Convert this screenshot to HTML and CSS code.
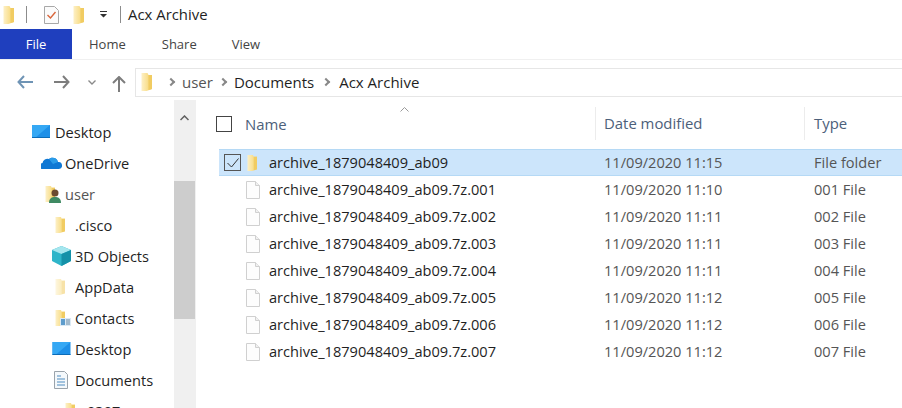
FILE: index.html

```html
<!DOCTYPE html>
<html lang="en">
<head>
<meta charset="utf-8"/>
<title>Acx Archive</title>
<link rel="stylesheet" href="styles.css">
</head>
<body>
<svg class="defs" width="0" height="0">
  <defs>
    <linearGradient id="folder-fill" x1="0" x2="1" y1="0" y2="0">
      <stop offset="0" stop-color="#fdf0c6"/>
      <stop offset="0.55" stop-color="#f9e092"/>
      <stop offset="1" stop-color="#efc95a"/>
    </linearGradient>
  </defs>
  <symbol id="folder" viewBox="0 0 12 20">
    <path d="M1 1h6l1 2h3.500v14L6 19H1z" fill="url(#folder-fill)"/>
    <path d="M8 3h3.500v14L8 18z" fill="#f1cc62"/>
  </symbol>
  <symbol id="file" viewBox="0 0 14 18">
    <path d="M.5.500h9l4 4v13H.5z" fill="#fdfdfd" stroke="#d0d0d0"/>
    <path d="M9.500.5v4h4" fill="#f0f0f0" stroke="#d0d0d0"/>
  </symbol>
  <symbol id="screen" viewBox="0 0 18 13">
    <path d="M0 0h18v13H0z" fill="#1e90e8"/>
    <path d="M0 0h18L3 13H0z" fill="#35a8f4"/>
    <path d="M0 12h18v1H0z" fill="#0b6cb8"/>
  </symbol>
</svg>

<div class="titlebar">
  <svg class="ico-folder-top"><use href="#folder"/></svg>
  <span class="bar-sep"></span>
  <svg class="ico-props" viewBox="0 0 15 18">
    <path d="M.5.500h10l4 4v13H.5z" fill="#fbfbfb" stroke="#a8a8a8"/>
    <path d="M3.500 9l3 3 5-6" fill="none" stroke="#d9653a" stroke-width="1.400"/>
  </svg>
  <svg class="ico-folder-top second"><use href="#folder"/></svg>
  <svg class="ico-caret" viewBox="0 0 7 7">
    <path d="M0 0h7v1H0zM0 3h7L3.500 6.500z" fill="#333"/>
  </svg>
  <span class="bar-sep last"></span>
  <span class="title">Acx Archive</span>
</div>

<div class="tabs">
  <div class="tab file-tab">File</div>
  <div class="tab home-tab">Home</div>
  <div class="tab share-tab">Share</div>
  <div class="tab view-tab">View</div>
</div>

<div class="addressbar">
  <svg class="nav-arrow back" viewBox="0 0 16 14"><path d="M7 1L1.500 7 7 13M2 7h14" fill="none" stroke="#6f94b5" stroke-width="2"/></svg>
  <svg class="nav-arrow fwd" viewBox="0 0 16 14"><path d="M9 1l5.500 6L9 13M14 7H0" fill="none" stroke="#7d7d7d" stroke-width="2"/></svg>
  <svg class="nav-drop" viewBox="0 0 8 5"><path d="M.5.500L4 4 7.500.5" fill="none" stroke="#8a8a8a" stroke-width="1.400"/></svg>
  <svg class="nav-arrow up" viewBox="0 0 14 16"><path d="M1 7l6-6 6 6M7 1.500V16" fill="none" stroke="#7d7d7d" stroke-width="2"/></svg>
  <div class="crumbs">
    <svg class="crumb-folder"><use href="#folder"/></svg>
    <span class="chev"></span><span class="crumb grey">user</span>
    <span class="chev"></span><span class="crumb">Documents</span>
    <span class="chev wide"></span><span class="crumb">Acx Archive</span>
  </div>
</div>

<div class="main">
  <div class="nav">
    <div class="tree">
      <div class="node lvl0"><svg class="ic-screen"><use href="#screen"/></svg>Desktop</div>
      <div class="node lvl1"><svg class="ic-cloud" viewBox="0 0 21 13"><path d="M2 13a3 3 0 0 1-.5-6A5 5 0 0 1 8 3a5.500 5.500 0 0 1 9 3 3.500 3.500 0 0 1 1 7z" fill="#0f78d4"/><path d="M8 3a5.500 5.500 0 0 1 9 3l-5 2z" fill="#2a9be8"/></svg>OneDrive</div>
      <div class="node lvl2 grey"><svg class="ic-folder"><use href="#folder"/></svg><svg class="ic-user" viewBox="0 0 12 14"><circle cx="6" cy="4" r="3.500" fill="#6b4a2f"/><path d="M0 14c0-5 3-6 6-6s6 1 6 6z" fill="#3f8a63"/></svg>user</div>
      <div class="node lvl3"><svg class="ic-folder"><use href="#folder"/></svg>.cisco</div>
      <div class="node lvl3 wide-ic"><svg class="ic-cube" viewBox="0 0 19 20"><path d="M9.500 0L19 4v11l-9.500 5L0 15V4z" fill="#2eb5c9"/><path d="M0 4l9.500 4L19 4 9.500 0z" fill="#a5e6ee"/><path d="M9.500 8v12L19 15V4z" fill="#1591a8"/></svg>3D Objects</div>
      <div class="node lvl3"><svg class="ic-folder faded"><use href="#folder"/></svg>AppData</div>
      <div class="node lvl3"><svg class="ic-folder"><use href="#folder"/></svg><svg class="ic-contact" viewBox="0 0 11 8"><path d="M0 0h11v8H0z" fill="#dbe9f4"/><path d="M1 1h4v6H1z" fill="#5e9ccc"/><path d="M6 2h4M6 4h4M6 6h4" stroke="#6b8ba5"/></svg>Contacts</div>
      <div class="node lvl3 wide-ic"><svg class="ic-screen wide"><use href="#screen"/></svg>Desktop</div>
      <div class="node lvl3"><svg class="ic-doc" viewBox="0 0 14 18"><path d="M.5.500h10l3 3v14H.5z" fill="#f4f8fb" stroke="#9aa3ab"/><path d="M3 5h4M3 8h8M3 11h8M3 14h8" stroke="#4f8cc0"/></svg>Documents</div>
      <div class="node lvl4"><svg class="ic-folder"><use href="#folder"/></svg>0307</div>
    </div>
    <div class="scrollbar">
      <div class="scroll-up"><svg viewBox="0 0 9 6"><path d="M.5 5L4.500 1l4 4" fill="none" stroke="#606060" stroke-width="1.500"/></svg></div>
      <div class="thumb"></div>
    </div>
  </div>

  <div class="content">
    <div class="head">
      <svg class="sort" viewBox="0 0 9 5"><path d="M.5 4.500L4.500.5l4 4" fill="none" stroke="#9a9a9a"/></svg>
      <span class="head-check"></span>
      <span class="col-name">Name</span>
      <span class="col-date">Date modified</span>
      <span class="col-type">Type</span>
    </div>
    <div class="rows">
      <div class="row selected">
        <span class="row-check"><svg viewBox="0 0 12 10"><path d="M.5 5l4 4 7-8.500" fill="none" stroke="#333"/></svg></span>
        <svg class="ic-folder row-ic"><use href="#folder"/></svg>
        <span class="col-name">archive_1879048409_ab09</span>
        <span class="col-date">11/09/2020 11:15</span>
        <span class="col-type">File folder</span>
      </div>
      <div class="row"><svg class="ic-file row-ic"><use href="#file"/></svg><span class="col-name">archive_1879048409_ab09.7z.001</span><span class="col-date">11/09/2020 11:10</span><span class="col-type">001 File</span></div>
      <div class="row"><svg class="ic-file row-ic"><use href="#file"/></svg><span class="col-name">archive_1879048409_ab09.7z.002</span><span class="col-date">11/09/2020 11:11</span><span class="col-type">002 File</span></div>
      <div class="row"><svg class="ic-file row-ic"><use href="#file"/></svg><span class="col-name">archive_1879048409_ab09.7z.003</span><span class="col-date">11/09/2020 11:11</span><span class="col-type">003 File</span></div>
      <div class="row"><svg class="ic-file row-ic"><use href="#file"/></svg><span class="col-name">archive_1879048409_ab09.7z.004</span><span class="col-date">11/09/2020 11:11</span><span class="col-type">004 File</span></div>
      <div class="row"><svg class="ic-file row-ic"><use href="#file"/></svg><span class="col-name">archive_1879048409_ab09.7z.005</span><span class="col-date">11/09/2020 11:12</span><span class="col-type">005 File</span></div>
      <div class="row"><svg class="ic-file row-ic"><use href="#file"/></svg><span class="col-name">archive_1879048409_ab09.7z.006</span><span class="col-date">11/09/2020 11:12</span><span class="col-type">006 File</span></div>
      <div class="row"><svg class="ic-file row-ic"><use href="#file"/></svg><span class="col-name">archive_1879048409_ab09.7z.007</span><span class="col-date">11/09/2020 11:12</span><span class="col-type">007 File</span></div>
    </div>
  </div>
</div>
</body>
</html>
```

FILE: styles.css

```css
* { box-sizing: border-box; }
html, body { height: 100%; }
body {
  margin: 0;
  width: 902px;
  height: 408px;
  overflow: hidden;
  background: #fff;
  font-family: "Open Sans", "Noto Sans", sans-serif;
  font-size: 14.6px;
  color: #1f1f1f;
}
.defs { display: block; height: 0; }
svg { display: block; flex: none; }

.titlebar { display: flex; align-items: center; height: 29px; }
.ico-folder-top { width: 13px; height: 20px; margin-left: 2px; }
.ico-folder-top.second { margin-left: 13px; }
.bar-sep { width: 1px; height: 17px; background: #8c8c8c; margin-left: 11px; }
.bar-sep.last { margin-left: 13px; }
.ico-props { width: 15px; height: 18px; margin-left: 17px; }
.ico-caret { width: 7px; height: 7px; margin-left: 15px; }
.title { margin-left: 7px; padding-bottom: 2px; font-size: 14.9px; }

.tabs { display: flex; height: 31px; border-bottom: 1px solid #f0f0f0; }
.tab { display: flex; align-items: center; height: 30px; color: #444; font-size: 13px; }
.file-tab { width: 72px; justify-content: center; background: #1f3fbe; color: #fff; }
.home-tab { margin-left: 17px; }
.share-tab { margin-left: 36px; }
.view-tab { margin-left: 35px; }

.addressbar { display: flex; align-items: center; height: 40px; padding-top: 4px; }
.nav-arrow { width: 16px; height: 14px; }
.nav-arrow.back { margin-left: 17px; }
.nav-arrow.fwd { margin-left: 21px; }
.nav-drop { width: 8px; height: 5px; margin-left: 18px; }
.nav-arrow.up { width: 14px; height: 16px; margin-left: 16px; margin-top: 3px; }
.crumbs {
  flex: 1;
  display: flex;
  align-items: center;
  height: 29px;
  margin-left: 9px;
  border: 1px solid #e6e6e6;
  border-right: 0;
  padding-left: 4px;
}
.crumb-folder { width: 13px; height: 20px; }
.chev {
  width: 6px;
  height: 6px;
  margin: 0 8px 0 15px;
  border-top: 2px solid #888;
  border-right: 2px solid #888;
  transform: rotate(45deg);
}
.crumb + .chev { margin-left: 7px; }
.crumb + .chev.wide { margin-left: 9px; margin-right: 10px; }
.crumb { font-size: 15px; }
.grey { color: #555; }

.main { display: flex; height: 308px; }
.nav { display: flex; width: 196px; border-right: 1px solid #f0f0f0; }
.tree { width: 174px; padding-top: 16px; }
.node { display: flex; align-items: center; height: 31px; white-space: nowrap; }
.lvl0 { padding-left: 32px; }
.lvl1 { padding-left: 41px; }
.lvl2 { padding-left: 44px; }
.lvl3 { padding-left: 54px; }
.lvl3.wide-ic { padding-left: 52px; }
.lvl4 { padding-left: 64px; }

.ic-screen { width: 18px; height: 13px; margin-right: 5px; }
.ic-screen.wide { width: 19px; margin-right: 4px; }
.ic-cloud { width: 21px; height: 13px; margin-right: 3px; }
.ic-folder { width: 12px; height: 18px; margin-right: 9px; }
.ic-folder.faded { opacity: 0.55; }
.lvl2 .ic-folder { margin-right: 8px; }
.lvl4 .ic-folder { margin-right: 11px; }
.ic-user { width: 12px; height: 14px; margin: 5px 4px 0 -15px; }
.ic-contact { width: 11px; height: 8px; margin: 9px 4px 0 -15px; }
.ic-cube { width: 19px; height: 20px; margin-right: 4px; }
.ic-doc { width: 14px; height: 18px; margin-right: 7px; }

.scrollbar { width: 21px; background: #f0f0f0; }
.scroll-up { display: flex; justify-content: center; padding-top: 15px; height: 81px; }
.scroll-up svg { width: 9px; height: 6px; }
.thumb { height: 138px; background: #cdcdcd; }

.content { flex: 1; position: relative; }
.head { display: flex; align-items: center; height: 49px; padding-bottom: 2px; color: #4c607a; font-size: 14.9px; }
.sort { position: absolute; left: 204px; top: 7px; width: 9px; height: 5px; }
.head-check { width: 16px; height: 16px; margin-left: 20px; border: 1.500px solid #444; }
.head .col-name { margin-left: 13px; width: 350px; }
.head .col-date { width: 209px; padding-left: 8px; border-left: 1px solid #ececec; line-height: 33px; }
.head .col-type { padding-left: 9px; border-left: 1px solid #ececec; line-height: 33px; }

.rows { padding-left: 23px; }
.row { display: flex; align-items: center; height: 27px; white-space: nowrap; }
.row.selected { background: #cce5fb; border: 1px solid #b5d9f5; border-width: 1px 0; }
.row-check {
  display: flex;
  align-items: center;
  justify-content: center;
  width: 17px;
  height: 17px;
  margin-left: 5px;
  margin-right: 7px;
  border: 1px solid #555;
}
.row-check svg { width: 12px; height: 10px; }
.row-ic { margin-left: 27px; margin-right: 0; }
.row-check + .row-ic { margin-left: -2px; margin-right: 0; }
.ic-file { width: 14px; height: 18px; }
.row .col-name { width: 335px; margin-left: 9px; padding-bottom: 2px; }
.row-check + .row-ic + .col-name { margin-left: 11px; }
.row .col-date { width: 210px; padding-bottom: 2px; color: #555; }
.row .col-type { padding-bottom: 2px; color: #555; }
```
